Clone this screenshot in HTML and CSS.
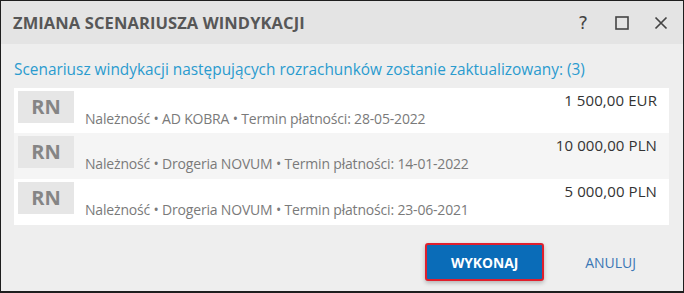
FILE: index.html
```html
<!DOCTYPE html>
<html lang="pl">
<head>
<meta charset="utf-8">
<link rel="stylesheet" href="styles.css">
</head>
<body>
<div class="dialog">
  <div class="titlebar">
    <div class="title">ZMIANA SCENARIUSZA WINDYKACJI</div>
    <div class="tools">
      <span class="tool help">?</span>
      <span class="tool"><svg width="14" height="14" viewBox="0 0 14 14"><rect x="1" y="1" width="12" height="12" fill="none" stroke="#444" stroke-width="1.6"/></svg></span>
      <span class="tool"><svg width="14" height="14" viewBox="0 0 14 14"><path d="M1.5 1.5 L12.5 12.5 M12.5 1.5 L1.5 12.5" stroke="#444" stroke-width="1.7" fill="none"/></svg></span>
    </div>
  </div>
  <div class="content">
    <div class="subtitle">Scenariusz windykacji następujących rozrachunków zostanie zaktualizowany: (3)</div>
    <div class="list">
      <div class="row">
        <div class="badge">RN</div>
        <div class="info">Należność • AD KOBRA • Termin płatności: 28-05-2022</div>
        <div class="amount">1 500,00 EUR</div>
      </div>
      <div class="row alt">
        <div class="badge">RN</div>
        <div class="info">Należność • Drogeria NOVUM • Termin płatności: 14-01-2022</div>
        <div class="amount">10 000,00 PLN</div>
      </div>
      <div class="row">
        <div class="badge">RN</div>
        <div class="info">Należność • Drogeria NOVUM • Termin płatności: 23-06-2021</div>
        <div class="amount">5 000,00 PLN</div>
      </div>
    </div>
    <div class="actions">
      <button class="btn primary">WYKONAJ</button>
      <button class="btn link">ANULUJ</button>
    </div>
  </div>
</div>
</body>
</html>
```
FILE: styles.css
```css
* { box-sizing: border-box; }
html, body { margin: 0; padding: 0; }
body {
  width: 684px;
  height: 293px;
  font-family: "Open Sans", "Noto Sans", sans-serif;
  background: #eeeeee;
}
.dialog {
  width: 684px;
  height: 293px;
  border: 1px solid #1e1e1e;
  border-bottom-width: 2px;
  background: #eeeeee;
  display: flex;
  flex-direction: column;
}
.titlebar {
  height: 43px;
  flex: none;
  background: #e4e4e4;
  display: flex;
  align-items: center;
  justify-content: space-between;
  padding: 0 15px 0 12px;
}
.title {
  font-size: 16.5px;
  font-weight: 700;
  color: #575757;
  letter-spacing: 0.1px;
}
.tools {
  display: flex;
  align-items: center;
  gap: 25px;
}
.tool {
  display: flex;
  align-items: center;
  justify-content: center;
  width: 14px;
  height: 20px;
  color: #444;
}
.help {
  font-size: 18px;
  font-weight: 400;
  font-family: "DejaVu Sans", sans-serif;
}
.content {
  padding: 16px 14px 0 13px;
  flex: 1;
  display: flex;
  flex-direction: column;
}
.subtitle {
  color: #2a9bce;
  font-size: 15.4px;
  line-height: 20px;
  letter-spacing: 0;
  margin-bottom: 8px;
  white-space: nowrap;
}
.list {
  background: #ffffff;
}
.row {
  display: grid;
  grid-template-columns: 56px 1fr auto;
  grid-template-rows: 19px 18px;
  column-gap: 11px;
  padding: 3px 12px 0 4px;
  height: 45px;
}
.row.alt { background: #f5f5f5; height: 46px; }
.row:last-child { height: 46px; }
.badge {
  grid-row: 1 / 3;
  height: 32px;
  background: #e6e6e6;
  color: #858585;
  font-weight: 700;
  font-size: 20px;
  display: flex;
  align-items: center;
  justify-content: center;
  line-height: 1;
}
.info {
  grid-column: 2;
  grid-row: 2;
  color: #7a7a7a;
  font-size: 14px;
  letter-spacing: -0.18px;
  line-height: 18px;
  white-space: nowrap;
}
.amount {
  grid-column: 3;
  grid-row: 1;
  color: #333333;
  font-size: 15px;
  letter-spacing: 0.1px;
  line-height: 19px;
  white-space: nowrap;
}
.actions {
  display: flex;
  justify-content: flex-end;
  align-items: center;
  gap: 31px;
  padding: 18px 23px 0 0;
}
.btn {
  font-family: inherit;
  cursor: pointer;
}
.primary {
  width: 119px;
  height: 38px;
  background: #0a6cb8;
  color: #ffffff;
  font-weight: 700;
  font-size: 13.8px;
  border: 2px solid #e01f2d;
  border-radius: 3px;
  box-shadow: 0 2px 4px rgba(0,0,0,0.25);
}
.link {
  background: transparent;
  border: none;
  color: #3b77b5;
  font-size: 14px;
  padding: 0 10px;
}
```
